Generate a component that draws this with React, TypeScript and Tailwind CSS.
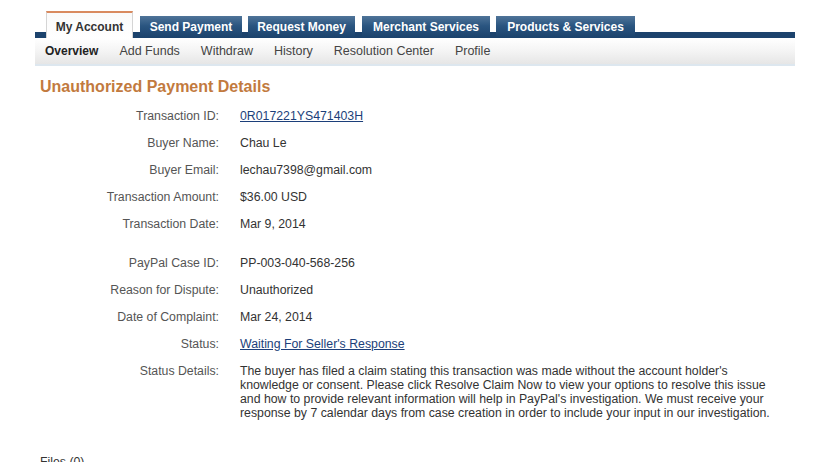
const tabs = [
  { name: 'Send Payment', cls: 'ml-[7px] w-[102px]' },
  { name: 'Request Money', cls: 'ml-[6px] w-[107px]' },
  { name: 'Merchant Services', cls: 'ml-[7px] w-[128px]' },
  { name: 'Products & Services', cls: 'ml-[6px] w-[139px]' },
]
const subnav = ['Add Funds', 'Withdraw', 'History', 'Resolution Center', 'Profile']

type Row = { label: string; value: string; link?: boolean }

const groupOne: Row[] = [
  { label: 'Transaction ID:', value: '0R017221YS471403H', link: true },
  { label: 'Buyer Name:', value: 'Chau Le' },
  { label: 'Buyer Email:', value: 'lechau7398@gmail.com' },
  { label: 'Transaction Amount:', value: '$36.00 USD' },
  { label: 'Transaction Date:', value: 'Mar 9, 2014' },
]

const groupTwo: Row[] = [
  { label: 'PayPal Case ID:', value: 'PP-003-040-568-256' },
  { label: 'Reason for Dispute:', value: 'Unauthorized' },
  { label: 'Date of Complaint:', value: 'Mar 24, 2014' },
  { label: 'Status:', value: "Waiting For Seller's Response", link: true },
]

function DetailRow({ label, value, link }: Row) {
  return (
    <div className="flex gap-[21px]">
      <div className="w-[184px] shrink-0 text-right text-[#555]">{label}</div>
      {link ? (
        <a href="#" className="text-[#1c3f7a] underline">
          {value}
        </a>
      ) : (
        <div className="text-[#333]">{value}</div>
      )}
    </div>
  )
}

export default function App() {
  return (
    <div className="min-h-screen bg-white font-['Liberation_Sans',Arial,sans-serif] text-[12.3px] leading-[14px]">
      <div className="mx-[35px] w-[760px] pt-[11px]">
        {/* main tabs */}
        <div className="flex h-[27px] items-end pl-[11px] bg-[linear-gradient(to_bottom,transparent_21px,#1c436d_21px)]">
          <div className="flex h-[27px] w-[87px] items-center justify-center border-t-2 border-x border-t-[#d98a5f] border-x-[#d5d5d5] bg-[linear-gradient(to_bottom,#fafafa,#ffffff)] pt-[2px] text-[12px] font-bold text-[#333]">
            My Account
          </div>
          {tabs.map((t) => (
            <div
              key={t.name}
              className={`${t.cls} flex h-[22px] items-center justify-center text-[12px] font-bold text-white bg-[linear-gradient(to_bottom,#4f7499,#2a5580_45%,#1b426c)]`}
            >
              {t.name}
            </div>
          ))}
        </div>

        {/* sub navigation */}
        <div className="flex h-[28px] items-center gap-[21px] border-b-2 border-[#dde7ef] bg-[linear-gradient(to_bottom,#ffffff,#f4f4f4_50%,#e6e6e6)] pl-[10px] text-[12.5px] text-[#444]">
          <span className="text-[12px] font-bold text-[#222]">Overview</span>
          {subnav.map((s) => (
            <span key={s}>{s}</span>
          ))}
        </div>

        <h1 className="mt-[11px] pl-[5px] text-[16px] font-bold leading-[19px] text-[#c27a3e]">
          Unauthorized Payment Details
        </h1>

        <div className="mt-[13px] flex flex-col gap-[13px]">
          {groupOne.map((r) => (
            <DetailRow key={r.label} {...r} />
          ))}
        </div>

        <div className="mt-[25px] flex flex-col gap-[13px]">
          {groupTwo.map((r) => (
            <DetailRow key={r.label} {...r} />
          ))}
          <div className="flex gap-[21px]">
            <div className="w-[184px] shrink-0 text-right text-[#555]">Status Details:</div>
            <p className="w-[535px] text-[#333]">
              The buyer has filed a claim stating this transaction was made without the account holder's
              knowledge or consent. Please click Resolve Claim Now to view your options to resolve this issue
              and how to provide relevant information will help in PayPal's investigation. We must receive your
              response by 7 calendar days from case creation in order to include your input in our investigation.
            </p>
          </div>
        </div>

        <div className="mt-[35px] pl-[5px] text-[#333]">Files (0)</div>
      </div>
    </div>
  )
}
